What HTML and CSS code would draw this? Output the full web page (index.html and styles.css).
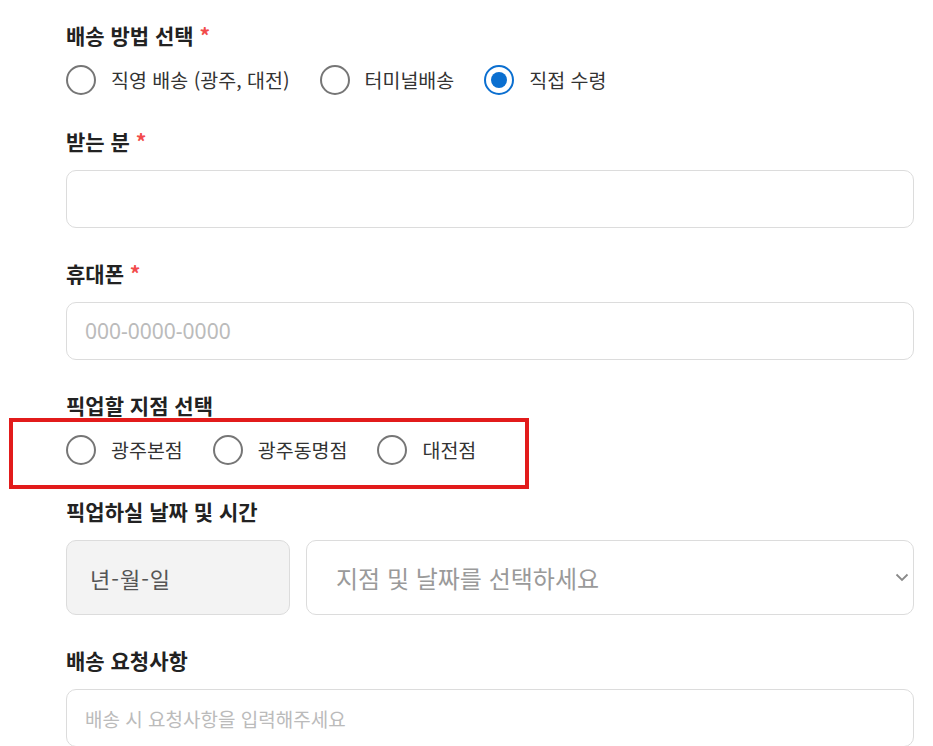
FILE: index.html
```html
<!DOCTYPE html>
<html lang="ko">
<head>
<meta charset="utf-8">
<link rel="stylesheet" href="styles.css">
</head>
<body>
<div class="form">
  <div class="group">
    <div class="label">배송 방법 선택 <span class="req">*</span></div>
    <div class="radios">
      <label class="radio"><span class="dot"></span><span class="rtext">직영 배송 (광주, 대전)</span></label>
      <label class="radio"><span class="dot"></span><span class="rtext">터미널배송</span></label>
      <label class="radio"><span class="dot checked"></span><span class="rtext">직접 수령</span></label>
    </div>
  </div>
  <div class="group">
    <div class="label field-label">받는 분 <span class="req">*</span></div>
    <div class="input"></div>
  </div>
  <div class="group">
    <div class="label field-label">휴대폰 <span class="req">*</span></div>
    <div class="input"><span class="ph ph-phone">000-0000-0000</span></div>
  </div>
  <div class="group">
    <div class="label">픽업할 지점 선택</div>
    <div class="radios highlighted">
      <div class="annot"></div>
      <label class="radio"><span class="dot"></span><span class="rtext">광주본점</span></label>
      <label class="radio"><span class="dot"></span><span class="rtext">광주동명점</span></label>
      <label class="radio"><span class="dot"></span><span class="rtext">대전점</span></label>
    </div>
  </div>
  <div class="group">
    <div class="label field-label">픽업하실 날짜 및 시간</div>
    <div class="date-row">
      <div class="date-box">년-월-일</div>
      <div class="select-box">
        <span class="select-ph">지점 및 날짜를 선택하세요</span>
        <svg class="chev" width="14" height="9" viewBox="0 0 14 9"><path d="M1.5 1.5 L7 7 L12.5 1.5" fill="none" stroke="#8a8a8a" stroke-width="1.8"/></svg>
      </div>
    </div>
  </div>
  <div class="group">
    <div class="label field-label">배송 요청사항</div>
    <div class="input"><span class="ph ph-req">배송 시 요청사항을 입력해주세요</span></div>
  </div>
</div>
</body>
</html>
```

FILE: styles.css
```css
html, body {
  margin: 0;
  padding: 0;
  background: #fff;
  height: 746px;
  overflow: hidden;
}
body {
  font-family: "Noto Sans CJK KR", "Noto Sans", sans-serif;
  color: #222;
}
.form {
  padding: 21px 19px 0 66px;
}
.group {
  margin-bottom: 31px;
}
.label {
  font-size: 21px;
  font-weight: 700;
  line-height: 28px;
  height: 28px;
  color: #222;
}
.field-label {
  margin-bottom: 15px;
}
.req {
  color: #f24b4b;
}
.radios {
  display: flex;
  align-items: center;
  height: 32px;
  margin-top: 15px;
  gap: 30px;
  position: relative;
}
.radio {
  display: flex;
  align-items: center;
  gap: 15px;
}
.dot {
  box-sizing: border-box;
  width: 30px;
  height: 30px;
  border-radius: 50%;
  border: 2px solid #767676;
  background: #fff;
  position: relative;
}
.dot.checked {
  border-color: #0b6fd0;
}
.dot.checked::after {
  content: "";
  position: absolute;
  left: 5px;
  top: 5px;
  width: 16px;
  height: 16px;
  border-radius: 50%;
  background: #0b6fd0;
}
.rtext {
  font-size: 19.5px;
  color: #333;
  line-height: 26px;
}
.annot {
  position: absolute;
  left: -57px;
  top: -16px;
  width: 512px;
  height: 63px;
  border: 4px solid #e21b1b;
  pointer-events: none;
}
.input {
  box-sizing: border-box;
  height: 58px;
  border: 1px solid #dcdcdc;
  border-radius: 10px;
  display: flex;
  align-items: center;
  padding-left: 18px;
}
.ph {
  color: #bbb;
}
.ph-phone {
  font-family: "Noto Sans", sans-serif;
  font-size: 21px;
}
.ph-req {
  font-size: 19px;
}
.date-row {
  display: flex;
  gap: 16px;
}
.date-box {
  box-sizing: border-box;
  width: 224px;
  height: 75px;
  border: 1px solid #dcdcdc;
  border-radius: 10px;
  background: #f3f3f3;
  display: flex;
  align-items: center;
  padding-left: 23px;
  font-size: 22px;
  letter-spacing: 1px;
  color: #555;
}
.select-box {
  box-sizing: border-box;
  flex: 1;
  height: 75px;
  border: 1px solid #dcdcdc;
  border-radius: 10px;
  display: flex;
  align-items: center;
  justify-content: space-between;
  padding: 0 4px 0 29px;
}
.select-ph {
  font-size: 24px;
  color: #9a9a9a;
}
.chev {
  display: block;
}
```
